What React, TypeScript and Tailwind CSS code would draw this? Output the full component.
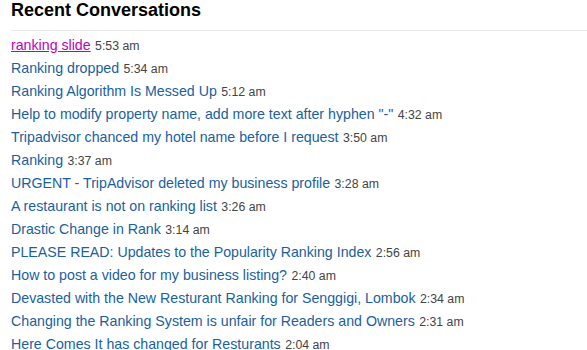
import React from "react";

const items: [string, string][] = [
  ["ranking slide", "5:53 am"],
  ["Ranking dropped", "5:34 am"],
  ["Ranking Algorithm Is Messed Up", "5:12 am"],
  ["Help to modify property name, add more text after hyphen \"-\"", "4:32 am"],
  ["Tripadvisor chanced my hotel name before I request", "3:50 am"],
  ["Ranking", "3:37 am"],
  ["URGENT - TripAdvisor deleted my business profile", "3:28 am"],
  ["A restaurant is not on ranking list", "3:26 am"],
  ["Drastic Change in Rank", "3:14 am"],
  ["PLEASE READ: Updates to the Popularity Ranking Index", "2:56 am"],
  ["How to post a video for my business listing?", "2:40 am"],
  ["Devasted with the New Resturant Ranking for Senggigi, Lombok", "2:34 am"],
  ["Changing the Ranking System is unfair for Readers and Owners", "2:31 am"],
  ["Here Comes It has changed for Resturants", "2:04 am"],
];

export default function App() {
  return (
    <div className="w-[587px] h-[350px] overflow-hidden bg-white pl-[11px]" style={{ fontFamily: "'Liberation Sans', Arial, sans-serif" }}>
      <h2 className="text-[18px] font-bold text-black leading-[22px] -mt-px">Recent Conversations</h2>
      <div className="h-px bg-[#e8e8e8] mt-[9px]" />
      <ul className="pt-[2px]">
        {items.map(([t, time], i) => (
          <li key={i} className="leading-[23px] h-[23px] whitespace-nowrap">
            <a
              href="#"
              className={
                i === 0
                  ? "text-[14.2px] text-[#c000c0] underline"
                  : "text-[14.2px] text-[#1a5f9e]"
              }
            >
              {t}
            </a>{" "}
            <span className="text-[12.3px] text-[#444]">{time}</span>
          </li>
        ))}
      </ul>
    </div>
  );
}
